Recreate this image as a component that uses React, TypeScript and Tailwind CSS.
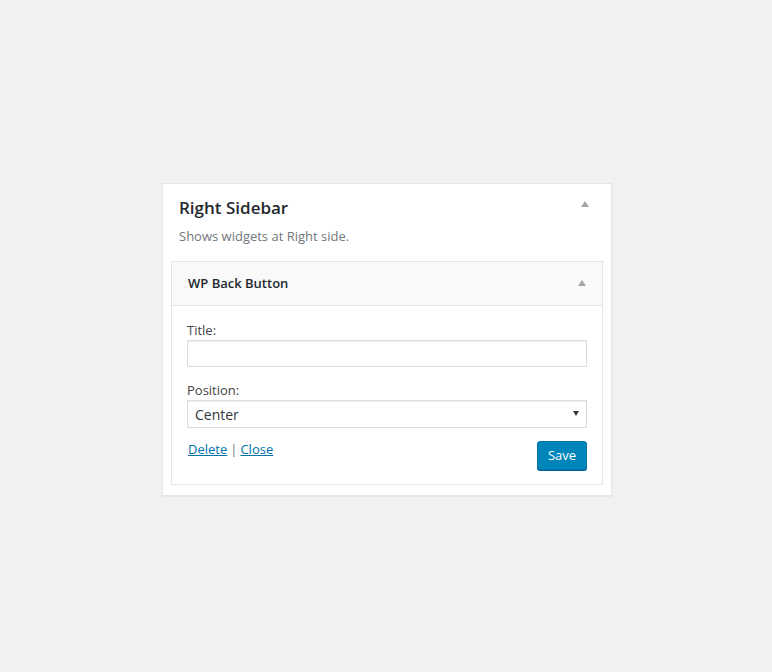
import { useState } from "react";

function Caret({ className }: { className?: string }) {
  return (
    <svg width="8" height="6" viewBox="0 0 8 6" className={className} aria-hidden>
      <path d="M4 0 L8 6 L0 6 Z" fill="currentColor" />
    </svg>
  );
}

export default function App() {
  const [title, setTitle] = useState("");
  const [position, setPosition] = useState("center");

  return (
    <div className="min-h-screen bg-[#f1f1f1] pt-[183px] pl-[162px] font-['Open_Sans',sans-serif] text-[13px] text-[#444]">
      <div className="w-[450px] border border-[#e5e5e5] bg-white px-2 pb-[10px] shadow-[0_1px_1px_rgba(0,0,0,0.04)]">
        <div className="flex items-start justify-between pt-[12px] pl-[8px] pr-[14px]">
          <h2 className="text-[17px] leading-[24px] font-semibold text-[#23282d]">Right Sidebar</h2>
          <Caret className="mt-[5px] text-[#a0a5aa]" />
        </div>
        <p className="mt-[6px] pl-[8px] leading-[20px] text-[#72777c]">Shows widgets at Right side.</p>

        <div className="mt-[15px] border border-[#e5e5e5] bg-white">
          <div className="flex h-[44px] items-center justify-between border-b border-[#e5e5e5] bg-[#f9f9f9] pb-[2px] pl-4 pr-4">
            <h3 className="text-[13px] leading-[18px] font-semibold text-[#23282d]">WP Back Button</h3>
            <Caret className="text-[#a0a5aa]" />
          </div>

          <div className="px-[15px] pt-[15px] pb-[14px]">
            <label className="block leading-[18px] text-[#444]" htmlFor="wbb-title">
              Title:
            </label>
            <input
              id="wbb-title"
              value={title}
              onChange={(e) => setTitle(e.target.value)}
              className="mt-px block h-[27px] w-full border border-[#ddd] bg-white px-2 text-[14px] text-[#32373c] shadow-[inset_0_1px_2px_rgba(0,0,0,0.07)] outline-none"
            />

            <label className="mt-[14px] block leading-[18px] text-[#444]" htmlFor="wbb-pos">
              Position:
            </label>
            <div className="relative mt-px">
              <select
                id="wbb-pos"
                value={position}
                onChange={(e) => setPosition(e.target.value)}
                className="block h-[28px] w-full appearance-none border border-[#ddd] bg-white pl-[7px] text-[14px] text-[#32373c] shadow-[inset_0_1px_2px_rgba(0,0,0,0.07)] outline-none"
              >
                <option value="left">Left</option>
                <option value="center">Center</option>
                <option value="right">Right</option>
              </select>
              <svg width="6" height="5" viewBox="0 0 6 5" className="pointer-events-none absolute top-[11px] right-[8px] text-[#32373c]" aria-hidden>
                <path d="M0 0 L6 0 L3 5 Z" fill="currentColor" />
              </svg>
            </div>

            <div className="mt-[13px] flex items-start justify-between">
              <div className="pl-px leading-[16px] text-[#72777c]">
                <a href="#" className="text-[#0073aa] underline">Delete</a>
                <span className="mx-[3px]">|</span>
                <a href="#" className="text-[#0073aa] underline">Close</a>
              </div>
              <button
                type="button"
                className="h-[29px] w-[50px] rounded-[3px] border border-[#0073aa] bg-[#0085ba] text-[13px] text-white shadow-[0_1px_0_#006799]"
              >
                Save
              </button>
            </div>
          </div>
        </div>
      </div>
    </div>
  );
}
